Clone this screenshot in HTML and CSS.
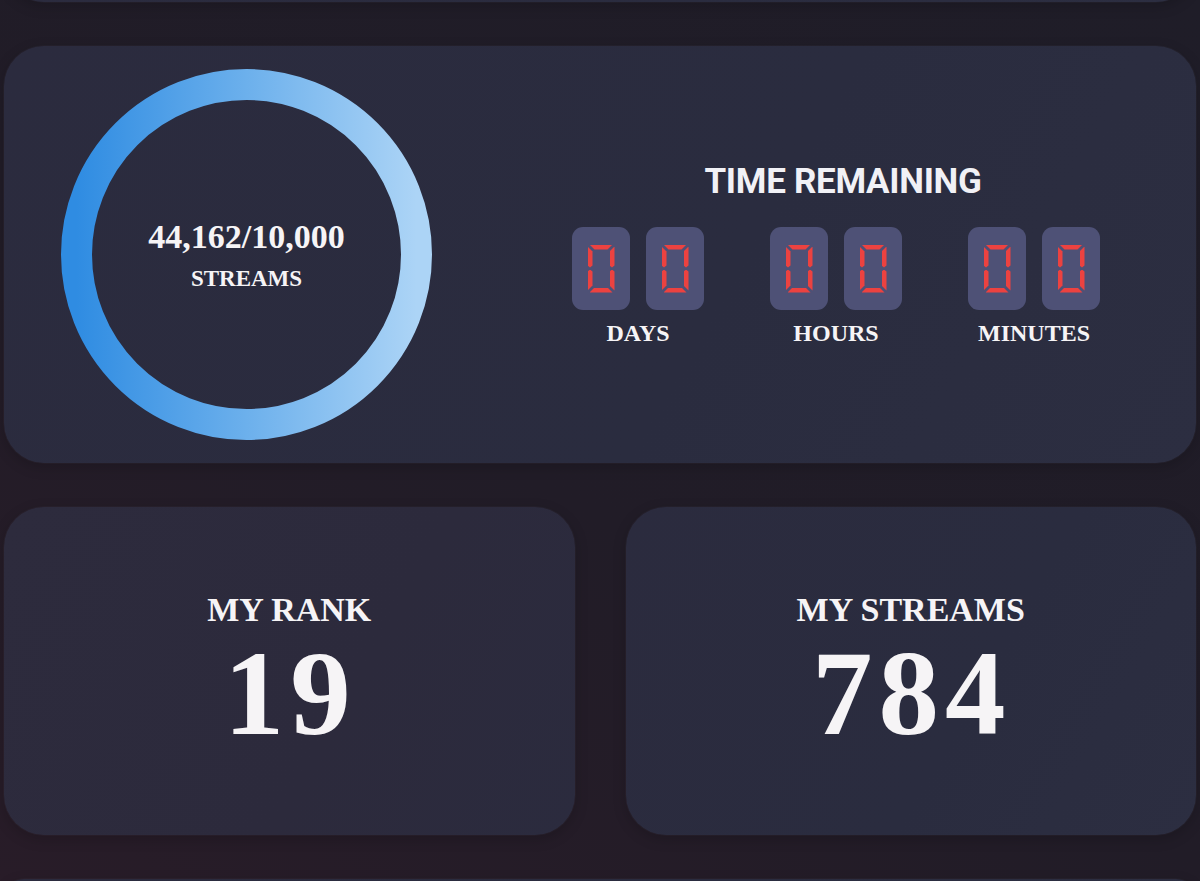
FILE: index.html
```html
<!DOCTYPE html>
<html lang="en">
<head>
<meta charset="utf-8">
<title>Streaming Goal</title>
<link rel="stylesheet" href="styles.css">
</head>
<body>
<div class="page">
  <div class="card card-edge card-prev"></div>

  <section class="card goal">
    <div class="ring">
      <svg class="ring-svg" viewBox="0 0 371 371" width="371" height="371" aria-hidden="true">
        <defs>
          <linearGradient id="ringGrad" x1="0" y1="0" x2="1" y2="0">
            <stop offset="0" stop-color="#2f8ce2"/>
            <stop offset="0.5" stop-color="#6cb0ec"/>
            <stop offset="1" stop-color="#acd4f6"/>
          </linearGradient>
        </defs>
        <circle cx="185.5" cy="185.5" r="170" fill="none" stroke="url(#ringGrad)" stroke-width="31"/>
      </svg>
      <div class="ring-text">
        <div class="ring-count">44,162/10,000</div>
        <div class="ring-label">STREAMS</div>
      </div>
    </div>

    <div class="timer">
      <h2 class="timer-title">TIME REMAINING</h2>
      <div class="timer-groups">
        <div class="tgroup">
          <div class="digits">
            <div class="dbox" role="img" aria-label="0"><span class="seg7"><i class="s a"></i><i class="s b"></i><i class="s c"></i><i class="s d"></i><i class="s e"></i><i class="s f"></i></span></div>
            <div class="dbox" role="img" aria-label="0"><span class="seg7"><i class="s a"></i><i class="s b"></i><i class="s c"></i><i class="s d"></i><i class="s e"></i><i class="s f"></i></span></div>
          </div>
          <div class="tlabel">DAYS</div>
        </div>
        <div class="tgroup">
          <div class="digits">
            <div class="dbox" role="img" aria-label="0"><span class="seg7"><i class="s a"></i><i class="s b"></i><i class="s c"></i><i class="s d"></i><i class="s e"></i><i class="s f"></i></span></div>
            <div class="dbox" role="img" aria-label="0"><span class="seg7"><i class="s a"></i><i class="s b"></i><i class="s c"></i><i class="s d"></i><i class="s e"></i><i class="s f"></i></span></div>
          </div>
          <div class="tlabel">HOURS</div>
        </div>
        <div class="tgroup">
          <div class="digits">
            <div class="dbox" role="img" aria-label="0"><span class="seg7"><i class="s a"></i><i class="s b"></i><i class="s c"></i><i class="s d"></i><i class="s e"></i><i class="s f"></i></span></div>
            <div class="dbox" role="img" aria-label="0"><span class="seg7"><i class="s a"></i><i class="s b"></i><i class="s c"></i><i class="s d"></i><i class="s e"></i><i class="s f"></i></span></div>
          </div>
          <div class="tlabel">MINUTES</div>
        </div>
      </div>
    </div>
  </section>

  <div class="stats">
    <section class="card stat stat-rank">
      <div class="stat-label">MY RANK</div>
      <div class="stat-value">19</div>
    </section>
    <section class="card stat stat-streams">
      <div class="stat-label">MY STREAMS</div>
      <div class="stat-value">784</div>
    </section>
  </div>

  <div class="card card-edge card-next"></div>
</div>
</body>
</html>
```

FILE: styles.css
```css
* { box-sizing: border-box; }

html, body {
  margin: 0;
  height: 100%;
  overflow: hidden;
}

body {
  background: linear-gradient(30deg, #281c28 0%, #211c27 45%, #1f1d28 100%);
  font-family: "Liberation Serif", "Times New Roman", serif;
  color: #f6f4f6;
}

.page {
  display: flex;
  flex-direction: column;
  gap: 44px;
  padding: 0 4px;
  height: 881px;
  overflow: hidden;
}

.card {
  background: linear-gradient(120deg, #2b2b3e 0%, #2a2c3f 60%, #2c2e41 100%);
  border-radius: 40px;
  box-shadow: 0 0 0 1px rgba(255, 255, 255, 0.025), 0 4px 14px rgba(0, 0, 0, 0.18);
}

.card-edge { flex: none; }
.card-prev { height: 100px; margin-top: -98px; }
.card-next { height: 40px; }

/* ---------- goal card ---------- */
.goal {
  flex: none;
  height: 417px;
  display: flex;
  align-items: center;
}

.ring {
  position: relative;
  width: 371px;
  height: 371px;
  margin-left: 57px;
  flex: none;
  display: flex;
  flex-direction: column;
  align-items: center;
  justify-content: center;
}

.ring-svg {
  position: absolute;
  inset: 0;
}

.ring-text {
  position: relative;
  text-align: center;
  font-weight: 700;
}

.ring-count {
  font-size: 34px;
  line-height: 40px;
}

.ring-label {
  font-size: 23px;
  line-height: 28px;
  margin-top: 8px;
}

.timer {
  flex: 1;
  display: flex;
  flex-direction: column;
  align-items: center;
  padding-left: 44px;
}

.timer-title {
  margin: 0;
  font-family: Roboto, "Liberation Sans", sans-serif;
  font-weight: 700;
  font-size: 35px;
  line-height: 40px;
  color: #f1f1f6;
  padding-left: 14px;
  letter-spacing: -0.3px;
}

.timer-groups {
  display: flex;
  gap: 66px;
  margin-top: 25px;
}

.tgroup {
  display: flex;
  flex-direction: column;
  align-items: center;
}

.digits {
  display: flex;
  gap: 16px;
}

.dbox {
  width: 58px;
  height: 83px;
  border-radius: 11px;
  background: #4e5176;
  display: flex;
  align-items: center;
  justify-content: center;
}

.seg7 {
  position: relative;
  display: block;
  width: 27px;
  height: 48px;
}

.s {
  position: absolute;
  background: #ec4240;
}

.s.a {
  top: 0; left: 2px; width: 23px; height: 5px;
  clip-path: polygon(0 0, 100% 0, calc(100% - 5px) 100%, 5px 100%);
}
.s.d {
  bottom: 0; left: 2px; width: 23px; height: 5px;
  clip-path: polygon(5px 0, calc(100% - 5px) 0, 100% 100%, 0 100%);
}
.s.f {
  left: 0; top: 2px; width: 5px; height: 21px;
  clip-path: polygon(0 0, 100% 5px, 100% calc(100% - 2px), 50% 100%, 0 calc(100% - 2px));
}
.s.e {
  left: 0; bottom: 2px; width: 5px; height: 21px;
  clip-path: polygon(50% 0, 100% 2px, 100% calc(100% - 5px), 0 100%, 0 2px);
}
.s.b {
  right: 0; top: 2px; width: 5px; height: 21px;
  clip-path: polygon(0 5px, 100% 0, 100% calc(100% - 2px), 50% 100%, 0 calc(100% - 2px));
}
.s.c {
  right: 0; bottom: 2px; width: 5px; height: 21px;
  clip-path: polygon(50% 0, 100% 2px, 100% 100%, 0 calc(100% - 5px), 0 2px);
}

.tlabel {
  margin-top: 9px;
  font-size: 24px;
  line-height: 28px;
  font-weight: 700;
}

/* ---------- stat cards ---------- */
.stats {
  flex: none;
  display: grid;
  grid-template-columns: 1fr 1fr;
  gap: 51px;
}

.stat {
  height: 328px;
  display: flex;
  flex-direction: column;
  align-items: center;
  justify-content: center;
  font-weight: 700;
}

.stat-rank {
  background: linear-gradient(120deg, #2d2b3d 0%, #2c2a3c 60%, #2b2b3e 100%);
}

.stat-label {
  font-size: 34px;
  line-height: 40px;
}

.stat-value {
  margin-top: 3px;
  font-size: 121px;
  line-height: 120px;
  letter-spacing: 6px;
  padding-left: 2px;
}
```
